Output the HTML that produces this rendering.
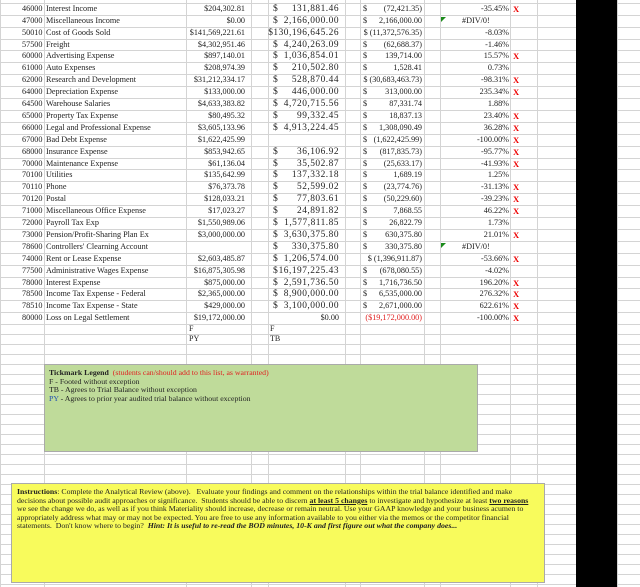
<!DOCTYPE html>
<html><head><meta charset="utf-8"><style>
body{margin:0;width:640px;height:587px;overflow:hidden;background:#fff;position:relative;font-family:"Liberation Serif",serif;color:#222}
.h{position:absolute;left:0;width:640px;height:1px;background:#d4d4d4}
.v{position:absolute;top:0;height:587px;width:1px;background:#d4d4d4}
.r{position:absolute;left:0;width:576px;height:12px;font-size:8.2px;line-height:12px;white-space:nowrap}
.r span{position:absolute;top:0}
.a{left:22px}.n{left:46px}
.p{right:331px;text-align:right}
.d1{left:273px;font-size:9.6px}
.t{right:237px;text-align:right;font-size:9.4px;letter-spacing:0.5px}
.d2{left:363px}
.g{right:154px;text-align:right}
.c{right:67px;text-align:right}
.x{left:513px;color:#e00;font-weight:bold;font-size:8.6px}
.red{color:#e02020}
</style></head><body>
<div class="h" style="top:3px"></div><div class="h" style="top:15px"></div><div class="h" style="top:27px"></div><div class="h" style="top:39px"></div><div class="h" style="top:50px"></div><div class="h" style="top:62px"></div><div class="h" style="top:74px"></div><div class="h" style="top:86px"></div><div class="h" style="top:98px"></div><div class="h" style="top:110px"></div><div class="h" style="top:122px"></div><div class="h" style="top:134px"></div><div class="h" style="top:146px"></div><div class="h" style="top:158px"></div><div class="h" style="top:169px"></div><div class="h" style="top:181px"></div><div class="h" style="top:193px"></div><div class="h" style="top:205px"></div><div class="h" style="top:217px"></div><div class="h" style="top:229px"></div><div class="h" style="top:241px"></div><div class="h" style="top:253px"></div><div class="h" style="top:265px"></div><div class="h" style="top:277px"></div><div class="h" style="top:288px"></div><div class="h" style="top:300px"></div><div class="h" style="top:312px"></div><div class="h" style="top:324px"></div><div class="h" style="top:334px"></div><div class="h" style="top:344px"></div><div class="h" style="top:354px"></div><div class="h" style="top:364px"></div><div class="h" style="top:374px"></div><div class="h" style="top:384px"></div><div class="h" style="top:394px"></div><div class="h" style="top:404px"></div><div class="h" style="top:414px"></div><div class="h" style="top:424px"></div><div class="h" style="top:434px"></div><div class="h" style="top:444px"></div><div class="h" style="top:454px"></div><div class="h" style="top:464px"></div><div class="h" style="top:474px"></div><div class="h" style="top:484px"></div><div class="h" style="top:494px"></div><div class="h" style="top:504px"></div><div class="h" style="top:514px"></div><div class="h" style="top:524px"></div><div class="h" style="top:534px"></div><div class="h" style="top:544px"></div><div class="h" style="top:554px"></div><div class="h" style="top:564px"></div><div class="h" style="top:574px"></div><div class="h" style="top:584px"></div>
<div class="v" style="left:0"></div><div class="v" style="left:44px"></div><div class="v" style="left:186px"></div><div class="v" style="left:251px"></div><div class="v" style="left:268px"></div><div class="v" style="left:345px"></div><div class="v" style="left:360px"></div><div class="v" style="left:424px"></div><div class="v" style="left:440px"></div><div class="v" style="left:510px"></div><div class="v" style="left:537px"></div><div class="v" style="left:617px"></div>
<div style="position:absolute;left:576px;top:0;width:41px;height:587px;background:#000"></div>

<div class="r" style="top:3px"><span class="a">46000</span><span class="n">Interest Income</span><span class="p">$204,302.81</span><span class="d1">$</span><span class="t">131,881.46</span><span class="d2">$</span><span class="g">(72,421.35)</span><span class="c">-35.45%</span><span class="x">X</span></div>
<div class="r" style="top:15px"><span class="a">47000</span><span class="n">Miscellaneous Income</span><span class="p">$0.00</span><span class="d1">$</span><span class="t">2,166,000.00</span><span class="d2">$</span><span class="g">2,166,000.00</span><span style="left:441px;top:2px;width:0;height:0;border-top:5px solid #1a8a1a;border-right:5px solid transparent"></span><span style="left:462px">#DIV/0!</span></div>
<div class="r" style="top:27px"><span class="a">50010</span><span class="n">Cost of Goods Sold</span><span class="p">$141,569,221.61</span><span class="t">$130,196,645.26</span><span class="g">$ (11,372,576.35)</span><span class="c">-8.03%</span></div>
<div class="r" style="top:39px"><span class="a">57500</span><span class="n">Freight</span><span class="p">$4,302,951.46</span><span class="d1">$</span><span class="t">4,240,263.09</span><span class="d2">$</span><span class="g">(62,688.37)</span><span class="c">-1.46%</span></div>
<div class="r" style="top:50px"><span class="a">60000</span><span class="n">Advertising Expense</span><span class="p">$897,140.01</span><span class="d1">$</span><span class="t">1,036,854.01</span><span class="d2">$</span><span class="g">139,714.00</span><span class="c">15.57%</span><span class="x">X</span></div>
<div class="r" style="top:62px"><span class="a">61000</span><span class="n">Auto Expenses</span><span class="p">$208,974.39</span><span class="d1">$</span><span class="t">210,502.80</span><span class="d2">$</span><span class="g">1,528.41</span><span class="c">0.73%</span></div>
<div class="r" style="top:74px"><span class="a">62000</span><span class="n">Research and Development</span><span class="p">$31,212,334.17</span><span class="d1">$</span><span class="t">528,870.44</span><span class="g">$ (30,683,463.73)</span><span class="c">-98.31%</span><span class="x">X</span></div>
<div class="r" style="top:86px"><span class="a">64000</span><span class="n">Depreciation Expense</span><span class="p">$133,000.00</span><span class="d1">$</span><span class="t">446,000.00</span><span class="d2">$</span><span class="g">313,000.00</span><span class="c">235.34%</span><span class="x">X</span></div>
<div class="r" style="top:98px"><span class="a">64500</span><span class="n">Warehouse Salaries</span><span class="p">$4,633,383.82</span><span class="d1">$</span><span class="t">4,720,715.56</span><span class="d2">$</span><span class="g">87,331.74</span><span class="c">1.88%</span></div>
<div class="r" style="top:110px"><span class="a">65000</span><span class="n">Property Tax Expense</span><span class="p">$80,495.32</span><span class="d1">$</span><span class="t">99,332.45</span><span class="d2">$</span><span class="g">18,837.13</span><span class="c">23.40%</span><span class="x">X</span></div>
<div class="r" style="top:122px"><span class="a">66000</span><span class="n">Legal and Professional Expense</span><span class="p">$3,605,133.96</span><span class="d1">$</span><span class="t">4,913,224.45</span><span class="d2">$</span><span class="g">1,308,090.49</span><span class="c">36.28%</span><span class="x">X</span></div>
<div class="r" style="top:134px"><span class="a">67000</span><span class="n">Bad Debt Expense</span><span class="p">$1,622,425.99</span><span class="d2">$</span><span class="g">(1,622,425.99)</span><span class="c">-100.00%</span><span class="x">X</span></div>
<div class="r" style="top:146px"><span class="a">68000</span><span class="n">Insurance Expense</span><span class="p">$853,942.65</span><span class="d1">$</span><span class="t">36,106.92</span><span class="d2">$</span><span class="g">(817,835.73)</span><span class="c">-95.77%</span><span class="x">X</span></div>
<div class="r" style="top:158px"><span class="a">70000</span><span class="n">Maintenance Expense</span><span class="p">$61,136.04</span><span class="d1">$</span><span class="t">35,502.87</span><span class="d2">$</span><span class="g">(25,633.17)</span><span class="c">-41.93%</span><span class="x">X</span></div>
<div class="r" style="top:169px"><span class="a">70100</span><span class="n">Utilities</span><span class="p">$135,642.99</span><span class="d1">$</span><span class="t">137,332.18</span><span class="d2">$</span><span class="g">1,689.19</span><span class="c">1.25%</span></div>
<div class="r" style="top:181px"><span class="a">70110</span><span class="n">Phone</span><span class="p">$76,373.78</span><span class="d1">$</span><span class="t">52,599.02</span><span class="d2">$</span><span class="g">(23,774.76)</span><span class="c">-31.13%</span><span class="x">X</span></div>
<div class="r" style="top:193px"><span class="a">70120</span><span class="n">Postal</span><span class="p">$128,033.21</span><span class="d1">$</span><span class="t">77,803.61</span><span class="d2">$</span><span class="g">(50,229.60)</span><span class="c">-39.23%</span><span class="x">X</span></div>
<div class="r" style="top:205px"><span class="a">71000</span><span class="n">Miscellaneous Office Expense</span><span class="p">$17,023.27</span><span class="d1">$</span><span class="t">24,891.82</span><span class="d2">$</span><span class="g">7,868.55</span><span class="c">46.22%</span><span class="x">X</span></div>
<div class="r" style="top:217px"><span class="a">72000</span><span class="n">Payroll Tax Exp</span><span class="p">$1,550,989.06</span><span class="d1">$</span><span class="t">1,577,811.85</span><span class="d2">$</span><span class="g">26,822.79</span><span class="c">1.73%</span></div>
<div class="r" style="top:229px"><span class="a">73000</span><span class="n">Pension/Profit-Sharing Plan Ex</span><span class="p">$3,000,000.00</span><span class="d1">$</span><span class="t">3,630,375.80</span><span class="d2">$</span><span class="g">630,375.80</span><span class="c">21.01%</span><span class="x">X</span></div>
<div class="r" style="top:241px"><span class="a">78600</span><span class="n">Controllers' Clearning Account</span><span class="d1">$</span><span class="t">330,375.80</span><span class="d2">$</span><span class="g">330,375.80</span><span style="left:441px;top:2px;width:0;height:0;border-top:5px solid #1a8a1a;border-right:5px solid transparent"></span><span style="left:462px">#DIV/0!</span></div>
<div class="r" style="top:253px"><span class="a">74000</span><span class="n">Rent or Lease Expense</span><span class="p">$2,603,485.87</span><span class="d1">$</span><span class="t">1,206,574.00</span><span class="g">$ (1,396,911.87)</span><span class="c">-53.66%</span><span class="x">X</span></div>
<div class="r" style="top:265px"><span class="a">77500</span><span class="n">Administrative Wages Expense</span><span class="p">$16,875,305.98</span><span class="d1">$</span><span class="t">16,197,225.43</span><span class="d2">$</span><span class="g">(678,080.55)</span><span class="c">-4.02%</span></div>
<div class="r" style="top:277px"><span class="a">78000</span><span class="n">Interest Expense</span><span class="p">$875,000.00</span><span class="d1">$</span><span class="t">2,591,736.50</span><span class="d2">$</span><span class="g">1,716,736.50</span><span class="c">196.20%</span><span class="x">X</span></div>
<div class="r" style="top:288px"><span class="a">78500</span><span class="n">Income Tax Expense - Federal</span><span class="p">$2,365,000.00</span><span class="d1">$</span><span class="t">8,900,000.00</span><span class="d2">$</span><span class="g">6,535,000.00</span><span class="c">276.32%</span><span class="x">X</span></div>
<div class="r" style="top:300px"><span class="a">78510</span><span class="n">Income Tax Expense - State</span><span class="p">$429,000.00</span><span class="d1">$</span><span class="t">3,100,000.00</span><span class="d2">$</span><span class="g">2,671,000.00</span><span class="c">622.61%</span><span class="x">X</span></div>
<div class="r" style="top:312px"><span class="a">80000</span><span class="n">Loss on Legal Settlement</span><span class="p">$19,172,000.00</span><span class="t" style="font-size:8.2px;letter-spacing:0">$0.00</span><span class="g red">($19,172,000.00)</span><span class="c">-100.00%</span><span class="x">X</span></div>
<div class="r" style="top:323px;font-size:8px"><span style="left:189px">F</span><span style="left:270px">F</span></div>
<div class="r" style="top:333px;font-size:8px"><span style="left:189px">PY</span><span style="left:270px">TB</span></div>

<div style="position:absolute;left:44px;top:364px;width:434px;height:88px;background:#bfdb9a;border:1px solid #aaa;box-sizing:border-box;font-size:7.8px;line-height:8.6px;padding:4px 0 0 4px;color:#222">
<b>Tickmark Legend</b>&nbsp; <span style="color:#e02020">(students can/should add to this list, as warranted)</span><br>F - Footed without exception<br>TB - Agrees to Trial Balance without exception<br><span style="color:#2050b0">PY</span> - Agrees to prior year audited trial balance without exception</div>

<div style="position:absolute;left:11px;top:483px;width:534px;height:100px;background:#f8fb5c;border:1px solid #aaa;box-sizing:border-box;font-size:7.8px;line-height:8.6px;padding:4px 6px 0 5px;color:#222">
<b>Instructions</b>: Complete the Analytical Review (above).&nbsp;&nbsp; Evaluate your findings and comment on the relationships within the trial balance identified and make decisions about possible audit approaches or significance.&nbsp; Students should be able to discern <b><u>at least 5 changes</u></b> to investigate and hypothesize at least <b><u>two reasons</u></b> we see the change we do, as well as if you think Materiality should increase, decrease or remain neutral. Use your GAAP knowledge and your business acumen to appropriately address what may or may not be expected. You are free to use any information available to you either via the memos or the competitor financial statements.&nbsp; Don't know where to begin?&nbsp; <b><i>Hint: It is useful to re-read the BOD minutes, 10-K and first figure out what the company does...</i></b></div>
</body></html>
